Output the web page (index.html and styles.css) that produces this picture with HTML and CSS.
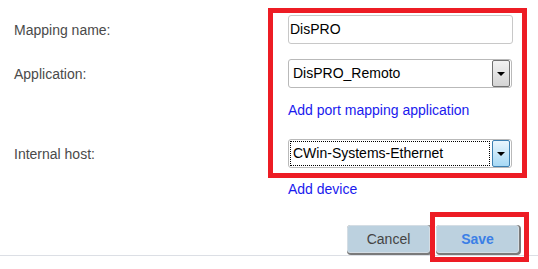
FILE: index.html
```html
<!DOCTYPE html>
<html lang="en">
<head>
    <meta charset="UTF-8">
    <meta name="viewport" content="width=device-width, initial-scale=1.0">
    <title>Port mapping</title>
    <link rel="stylesheet" href="styles.css">
</head>
<body>
    <div class="form-container">
        <div class="form-group">
            <label class="label">Mapping name:</label>
            <div class="text-input">DisPRO</div>
        </div>

        <div class="form-group">
            <label class="label">Application:</label>
            <div class="select">
                <span class="select-text">DisPRO_Remoto</span>
                <span class="select-btn"><span class="arrow"></span></span>
            </div>
        </div>
        <div class="link-row"><a href="#">Add port mapping application</a></div>

        <div class="form-group host-group">
            <label class="label">Internal host:</label>
            <div class="select focused">
                <span class="select-text">CWin-Systems-Ethernet</span>
                <span class="select-btn"><span class="arrow"></span></span>
            </div>
        </div>
        <div class="link-row"><a href="#">Add device</a></div>

        <div class="actions">
            <button class="btn">Cancel</button>
            <button class="btn btn-save">Save</button>
        </div>
    </div>

    <!-- annotation boxes drawn over the screenshot -->
    <div class="mark mark-fields"></div>
    <div class="mark mark-save"></div>
</body>
</html>
```

FILE: styles.css
```css
body {
    margin: 0;
    font-family: "Liberation Sans", Arial, sans-serif;
    font-size: 14px;
    background-color: white;
    position: relative;
    height: 269px;
    overflow: hidden;
}
.form-container {
    padding-top: 15px;
    border-bottom: 1px solid #dcdfe5;
    padding-bottom: 2px;
}
.form-group {
    display: grid;
    grid-template-columns: 288px 225px;
    align-items: center;
    margin-bottom: 15px;
}
.label {
    padding-left: 14px;
    color: #4a4a4a;
}
.text-input {
    height: 27px;
    line-height: 27px;
    border: 1px solid #c8c8c8;
    border-radius: 3px;
    padding-left: 1px;
    color: #000;
}
.select {
    display: flex;
    align-items: stretch;
    height: 27px;
    width: 222px;
    border: 1px solid #b9b9b9;
    border-radius: 3px;
    color: #000;
}
.select-text {
    flex: 1;
    line-height: 27px;
    padding-left: 4px;
}
.select-btn {
    width: 16px;
    margin: 0 1px 0 0;
    border: 1px solid #707070;
    border-radius: 2px;
    background: linear-gradient(#f2f2f2, #d4d4d4);
    display: flex;
    align-items: center;
    justify-content: center;
}
.arrow {
    width: 0;
    height: 0;
    border-left: 4px solid transparent;
    border-right: 4px solid transparent;
    border-top: 4px solid #000;
}
.focused .select-text {
    margin: 1px 2px 1px 1px;
    border: 1px dotted #000;
    line-height: 23px;
    padding-left: 2px;
}
.focused .select-btn {
    border-color: #3c7fb1;
    background: linear-gradient(#eaf6fd, #a7d9f5);
}
.link-row {
    padding-left: 288px;
    line-height: 16px;
    margin-top: -1px;
    margin-bottom: 21px;
}
.link-row a {
    color: #1a1aee;
    text-decoration: none;
}
.host-group {
    margin-bottom: 14px;
}
.actions {
    display: flex;
    justify-content: flex-end;
    gap: 6px;
    padding-right: 19px;
    margin-top: 28px;
}
.btn {
    width: 83px;
    height: 28px;
    font-family: "Liberation Sans", Arial, sans-serif;
    font-size: 14px;
    color: #444;
    background-color: #bcd1df;
    border: 1px solid #d4dde4;
    border-radius: 3px;
    box-shadow: 1px 1px 0 1px #7a7a7a;
    padding: 0;
}
.btn-save {
    color: #3b7fe6;
    font-weight: bold;
}
.mark {
    position: absolute;
    border: 5px solid #ed1c24;
}
.mark-fields {
    left: 268px;
    top: 8px;
    width: 249px;
    height: 160px;
}
.mark-save {
    left: 430px;
    top: 212px;
    width: 89px;
    height: 40px;
}
```
